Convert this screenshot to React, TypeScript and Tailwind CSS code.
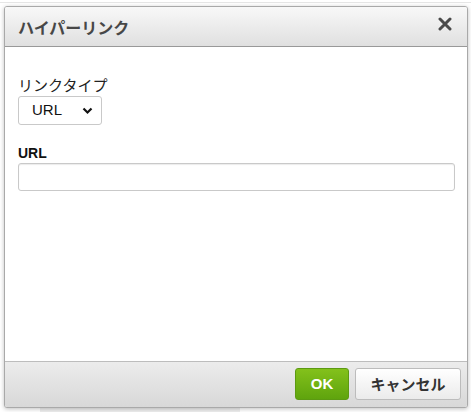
import React from 'react'

const font = { fontFamily: '"Noto Sans CJK JP", "Liberation Sans", Arial, sans-serif' }

export default function App() {
  return (
    <div className="relative w-[471px] h-[412px] bg-white overflow-hidden" style={font}>
      {/* faint page behind */}
      <div className="absolute left-0 top-[2px] w-[471px] h-px bg-[#e6e6e6]" />
      <div className="absolute left-[40px] top-[408px] w-[200px] h-[4px] bg-[#eeeeee]" />

      <div className="absolute left-[4px] top-[6px] w-[464px] h-[402px] flex flex-col bg-white border border-[#a9a9a9] rounded-[3px] shadow-[0_1px_4px_rgba(0,0,0,0.25)] overflow-hidden">
        <div className="h-[40px] shrink-0 flex items-center justify-between px-[13px] bg-gradient-to-b from-[#f8f8f8] to-[#e0e0e0] border-b border-[#999]">
          <span className="text-[16px] font-bold text-[#474747] leading-none">ハイパーリンク</span>
          <svg width="14" height="14" viewBox="0 0 14 14" className="mr-[2px] mb-[6px]">
            <path d="M2 2 L12 12 M12 2 L2 12" stroke="#4a4a4a" strokeWidth="3" strokeLinecap="round" />
          </svg>
        </div>

        <div className="flex-1 px-[13px] pt-[27px] flex flex-col">
          <label className="text-[15px] text-[#222] leading-[21px]">リンクタイプ</label>
          <div className="mt-[1px] w-[84px] h-[29px] border border-[#c9c9c9] rounded-[3px] bg-white flex items-center justify-between pl-[13px] pr-[8px]">
            <span className="text-[15px] text-[#111]" style={{ fontFamily: '"Liberation Sans", Arial, sans-serif' }}>URL</span>
            <svg width="11" height="8" viewBox="0 0 11 8">
              <path d="M1.5 1.5 L5.5 5.5 L9.5 1.5" stroke="#111" strokeWidth="2.2" fill="none" />
            </svg>
          </div>
          <label className="mt-[20px] text-[14px] font-bold text-[#111] leading-[17px]" style={{ fontFamily: '"Liberation Sans", Arial, sans-serif' }}>URL</label>
          <div className="mt-[1px] w-[437px] h-[28px] border border-[#c9c9c9] rounded-[3px] bg-white shadow-[inset_0_1px_1px_rgba(0,0,0,0.08)]" />
        </div>

        <div className="h-[46px] shrink-0 border-t border-[#bdbdbd] bg-gradient-to-b from-[#ececec] to-[#d8d8d8] flex items-center justify-end gap-[6px] pr-[6px] pb-[1px]">
          <button className="w-[54px] h-[32px] rounded-[3px] border border-[#5c9a12] bg-gradient-to-b from-[#83c11b] to-[#5fa40d] text-white text-[15px] font-bold" style={{ fontFamily: '"Liberation Sans", Arial, sans-serif' }}>
            OK
          </button>
          <button className="w-[106px] h-[32px] rounded-[3px] border border-[#bcbcbc] bg-gradient-to-b from-[#ffffff] to-[#ebebeb] text-[#333] text-[15px] font-bold">
            キャンセル
          </button>
        </div>
      </div>
    </div>
  )
}
